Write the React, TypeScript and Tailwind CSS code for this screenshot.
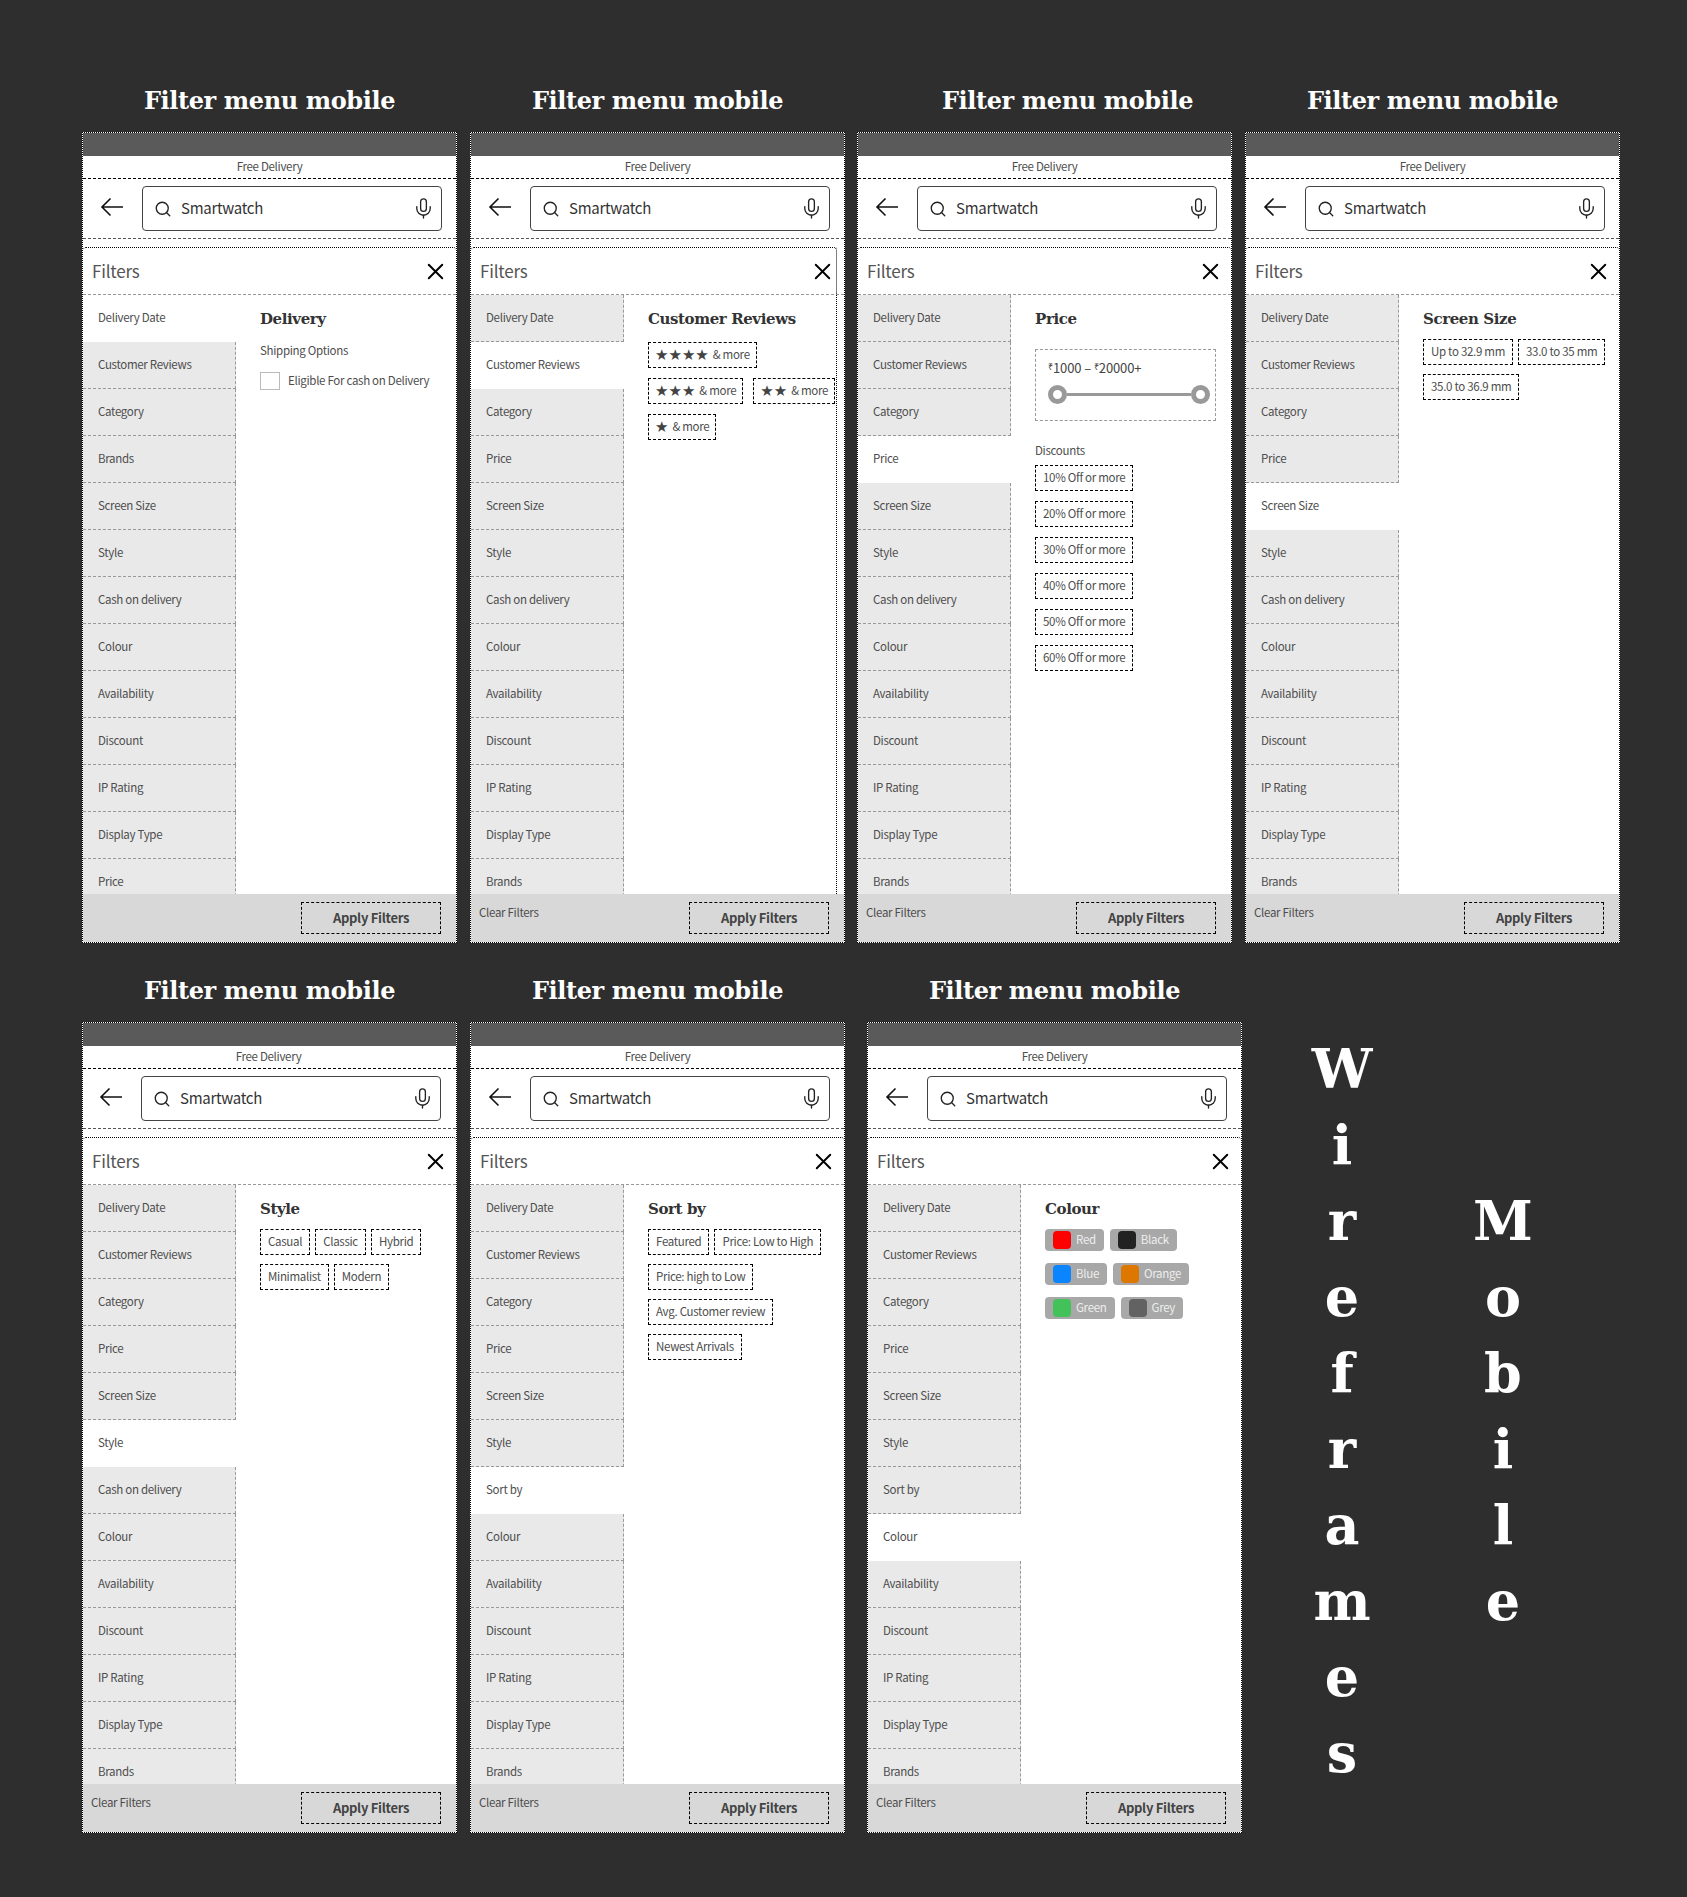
import type { ReactNode } from "react";
import { Mic, Search, X } from "lucide-react";

const baseItems = [
  "Delivery Date",
  "Customer Reviews",
  "Category",
  "Price",
  "Screen Size",
  "Style",
  "Cash on delivery",
  "Colour",
  "Availability",
  "Discount",
  "IP Rating",
  "Display Type",
  "Brands",
];

const firstItems = [
  "Delivery Date",
  "Customer Reviews",
  "Category",
  "Brands",
  "Screen Size",
  "Style",
  "Cash on delivery",
  "Colour",
  "Availability",
  "Discount",
  "IP Rating",
  "Display Type",
  "Price",
];

const sortItems = baseItems.map((i) => (i === "Cash on delivery" ? "Sort by" : i));

function Title({ children, className = "" }: { children: ReactNode; className?: string }) {
  return (
    <h2 className={`h-8 mb-[15px] w-[375px] text-center text-[24px] leading-8 font-bold text-white font-['DejaVu_Serif',serif] tracking-[-0.4px] ${className}`}>
      {children}
    </h2>
  );
}

function Chip({ children }: { children: ReactNode }) {
  return (
    <div className="h-[26px] px-[7px] flex items-center whitespace-nowrap border border-dashed border-black text-[11.5px] tracking-[-0.3px] text-[#4d4d4d]">
      {children}
    </div>
  );
}

function Stars({ count }: { count: number }) {
  return (
    <div className="h-[26px] px-[6px] flex items-center whitespace-nowrap border border-dashed border-black text-[11.5px] tracking-[-0.3px] text-[#4d4d4d]">
      <span className="mr-1 font-['DejaVu_Sans',sans-serif] text-[15px] tracking-normal leading-none text-[#444]">{"★".repeat(count)}</span>
      &amp; more
    </div>
  );
}

function Swatch({ color, label }: { color: string; label: string }) {
  return (
    <div className="h-[22px] px-2 flex items-center gap-[5px] rounded-sm bg-[#a8a8a8] text-[11.5px] tracking-[-0.3px] text-[#eeeeee]">
      <span className={`w-[18px] h-[18px] rounded-sm ${color}`} />
      {label}
    </div>
  );
}

function Frame({
  items,
  active,
  clear = true,
  narrow = false,
  nudge = false,
  children,
}: {
  items: string[];
  active: string;
  clear?: boolean;
  narrow?: boolean;
  nudge?: boolean;
  children: ReactNode;
}) {
  return (
    <div className="w-[375px] h-[811px] flex flex-col bg-white border border-dotted border-black">
      {/* status bar */}
      <div className="h-[23px] shrink-0 bg-[#5a5a5a]" />
      <div className={`h-[23px] shrink-0 flex items-center justify-center border-b border-dashed border-black text-[11.5px] tracking-[-0.3px] text-[#4d4d4d] ${nudge ? "pr-[2px]" : ""}`}>
        Free Delivery
      </div>
      {/* search row */}
      <div className={`h-[60px] shrink-0 flex items-center border-b border-dashed border-[#555] ${nudge ? "pl-4 pr-[15px]" : "pl-[17px] pr-[14px]"}`}>
        <svg width="24" height="20" viewBox="0 0 24 20" fill="none" stroke="#111" strokeWidth="1.6" className="shrink-0 -mt-[3px]">
          <path d="M23 10H2M10.5 1.5L2 10l8.5 8.5" />
        </svg>
        <div className="ml-[18px] flex-1 h-[45px] flex items-center pl-[11px] pr-[6px] rounded border border-[#444]">
          <Search size={18} strokeWidth={1.8} className="text-[#222] shrink-0" />
          <span className="ml-[9px] flex-1 text-[15px] tracking-[-0.3px] text-[#333]">Smartwatch</span>
          <Mic size={23} strokeWidth={1.4} className="text-[#222] shrink-0" />
        </div>
      </div>
      {/* filter panel */}
      <div className="mt-2 flex-1 min-h-0 flex flex-col">
        <div className={`h-[47px] shrink-0 flex items-center justify-between pl-[9px] rounded-t-[3px] border-t border-dotted border-black ${narrow ? "mr-[7px] pr-0 border-r" : "pr-[7px]"}`}>
          <span className="text-[17px] tracking-[-0.2px] text-[#555]">Filters</span>
          <X size={27} strokeWidth={1.7} className="text-black" />
        </div>
        <div className="flex-1 min-h-0 flex overflow-hidden border-t border-dashed border-[#999]">
          <div className="w-[153px] shrink-0">
            {items.map((item) => (
              <div
                key={item}
                className={`h-[47px] flex items-center pl-[15px] text-[11.5px] tracking-[-0.3px] text-[#4d4d4d] border-b border-dashed ${
                  item === active ? "bg-white border-transparent" : "bg-[#e9e9e9] border-[#999] border-r"
                }`}
              >
                {item}
              </div>
            ))}
          </div>
          <div className={`flex-1 min-w-0 pl-6 pt-3 ${narrow ? "mr-[7px] border-r border-dotted border-black" : ""}`}>{children}</div>
        </div>
        <div className="h-12 shrink-0 flex items-center justify-between pl-2 pr-[15px] bg-[#d8d8d8]">
          {clear && <span className="mb-[10px] text-[11.5px] tracking-[-0.3px] text-[#4d4d4d]">Clear Filters</span>}
          <div className="ml-auto w-[140px] h-8 flex items-center justify-center border border-dashed border-black text-[13px] tracking-[-0.3px] font-semibold text-[#444]">
            Apply Filters
          </div>
        </div>
      </div>
    </div>
  );
}

function Heading({ children }: { children: ReactNode }) {
  return <h3 className="h-6 text-[15px] leading-6 font-bold text-[#333] font-['DejaVu_Serif',serif] tracking-[-0.4px]">{children}</h3>;
}

function VerticalWord({ word, className }: { word: string; className: string }) {
  return (
    <div className={`w-[80px] flex flex-col items-center font-['DejaVu_Serif',serif] text-[54px] font-bold text-white ${className}`}>
      {word.split("").map((c, i) => (
        <span key={i} className="h-[76px] leading-[76px]">
          {c}
        </span>
      ))}
    </div>
  );
}

export default function App() {
  return (
    <div className="w-[1687px] h-[1897px] overflow-hidden bg-[#2e2e2e] pl-[82px] pt-[85px] font-['Noto_Sans_CJK_SC',sans-serif]">
      {/* first row */}
      <div className="flex gap-[13px]">
        <div>
          <Title>Filter menu mobile</Title>
          <Frame items={firstItems} active="Delivery Date" clear={false}>
            <Heading>Delivery</Heading>
            <p className="mt-[11px] h-4 leading-4 text-[11.5px] tracking-[-0.3px] text-[#4d4d4d]">Shipping Options</p>
            <div className="mt-[14px] flex items-center gap-2 text-[11.5px] tracking-[-0.3px] text-[#4d4d4d]">
              <span className="w-5 h-[18px] border border-[#bbb]" />
              Eligible For cash on Delivery
            </div>
          </Frame>
        </div>
        <div>
          <Title>Filter menu mobile</Title>
          <Frame items={baseItems} active="Customer Reviews" narrow>
            <Heading>Customer Reviews</Heading>
            <div className="mt-[11px] flex flex-wrap gap-[10px] -mr-[7px]">
              <div className="w-full flex">
                <Stars count={4} />
              </div>
              <Stars count={3} />
              <Stars count={2} />
              <Stars count={1} />
            </div>
          </Frame>
        </div>
        <div className="-ml-px w-[375px]">
          <Title className="ml-[23px]">Filter menu mobile</Title>
          <Frame items={baseItems} active="Price">
            <Heading>Price</Heading>
            <div className="mt-[18px] w-[181px] h-[72px] pl-3 pr-[5px] pt-[7px] border border-dashed border-[#999]">
              <p className="h-5 leading-5 text-[13px] tracking-[-0.1px] text-[#444]">
                <span className="text-[9px] align-[3px]">₹</span>1000 – <span className="text-[9px] align-[3px]">₹</span>20000+
              </p>
              <div className="mt-2 flex items-center">
                <span className="w-[19px] h-[19px] rounded-full border-[5px] border-[#999]" />
                <span className="flex-1 h-[3px] bg-[#999]" />
                <span className="w-[19px] h-[19px] rounded-full border-[5px] border-[#999]" />
              </div>
            </div>
            <p className="mt-5 h-[18px] leading-[18px] text-[11.5px] tracking-[-0.3px] text-[#4d4d4d]">Discounts</p>
            <div className="mt-[6px] flex flex-col items-start gap-[10px]">
              {[10, 20, 30, 40, 50, 60].map((d) => (
                <Chip key={d}>{d}% Off or more</Chip>
              ))}
            </div>
          </Frame>
        </div>
        <div>
          <Title>Filter menu mobile</Title>
          <Frame items={baseItems} active="Screen Size">
            <Heading>Screen Size</Heading>
            <div className="mt-2 flex flex-wrap gap-x-[5px] gap-y-[9px]">
              <Chip>Up to 32.9 mm</Chip>
              <Chip>33.0 to 35 mm</Chip>
              <Chip>35.0 to 36.9 mm</Chip>
            </div>
          </Frame>
        </div>
      </div>

      {/* second row */}
      <div className="mt-8 flex gap-[13px]">
        <div>
          <Title>Filter menu mobile</Title>
          <Frame items={baseItems} active="Style" nudge>
            <Heading>Style</Heading>
            <div className="mt-2 flex flex-wrap gap-x-[5px] gap-y-[9px]">
              {["Casual", "Classic", "Hybrid", "Minimalist", "Modern"].map((s) => (
                <Chip key={s}>{s}</Chip>
              ))}
            </div>
          </Frame>
        </div>
        <div>
          <Title>Filter menu mobile</Title>
          <Frame items={sortItems} active="Sort by">
            <Heading>Sort by</Heading>
            <div className="mt-2 flex flex-wrap gap-x-[5px] gap-y-[9px]">
              {["Featured", "Price: Low to High", "Price: high to Low", "Avg. Customer review", "Newest Arrivals"].map((s) => (
                <Chip key={s}>{s}</Chip>
              ))}
            </div>
          </Frame>
        </div>
        <div className="ml-[-3px] pl-[12px] -mr-[3px]">
          <Title>Filter menu mobile</Title>
          <Frame items={sortItems} active="Colour">
            <Heading>Colour</Heading>
            <div className="mt-2 flex flex-col gap-3">
              <div className="flex gap-[6px]">
                <Swatch color="bg-[#ff0000]" label="Red" />
                <Swatch color="bg-[#222222]" label="Black" />
              </div>
              <div className="flex gap-[6px]">
                <Swatch color="bg-[#0a84ff]" label="Blue" />
                <Swatch color="bg-[#dd7700]" label="Orange" />
              </div>
              <div className="flex gap-[6px]">
                <Swatch color="bg-[#44c25a]" label="Green" />
                <Swatch color="bg-[#626262]" label="Grey" />
              </div>
            </div>
          </Frame>
        </div>
        <div className="ml-[50px] pt-[50px] flex gap-[81px]">
          <VerticalWord word="Wireframes" className="pt-[6px]" />
          <VerticalWord word="Mobile" className="pt-[158px]" />
        </div>
      </div>
    </div>
  );
}
